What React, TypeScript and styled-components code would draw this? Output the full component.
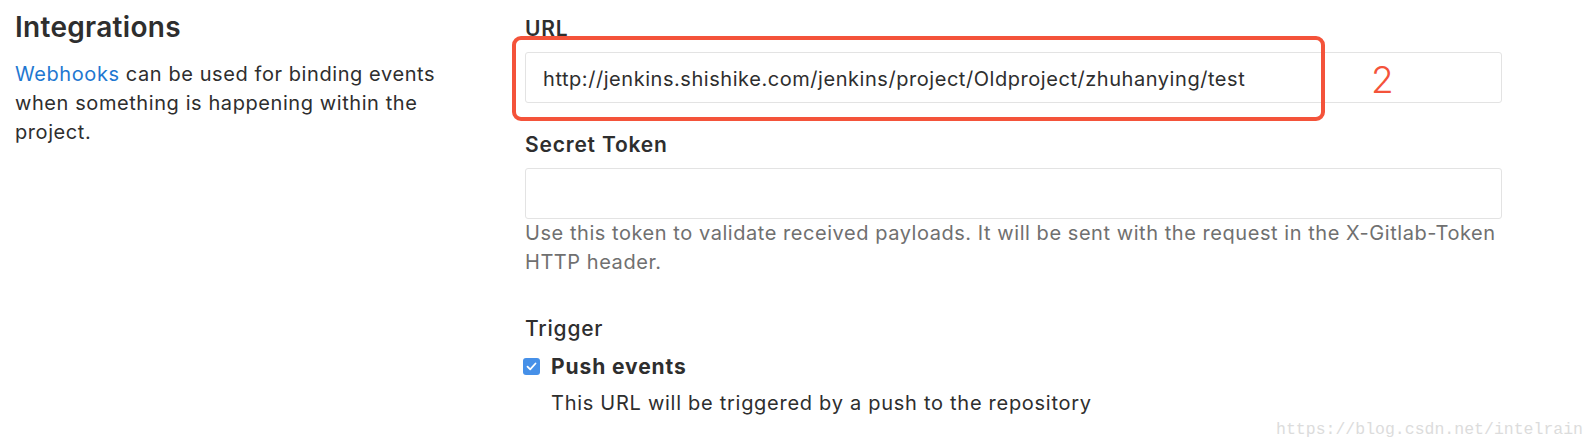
import React from "react";
import styled, { createGlobalStyle } from "styled-components";

const GlobalStyle = createGlobalStyle`
  html, body { margin: 0; padding: 0; background: #ffffff; }
  body { font-family: Inter, "Noto Sans", "Liberation Sans", sans-serif; color: #2e2e2e; }
  * { box-sizing: border-box; }
`;

const Page = styled.div`
  position: relative;
  width: 1596px;
  height: 448px;
  overflow: hidden;
  display: grid;
  grid-template-columns: 510px 977px;
  padding-left: 15px;
  align-items: start;
`;

const Side = styled.div`
  display: flex;
  flex-direction: column;
`;

const Heading = styled.h4`
  margin: 9px 0 0;
  font-size: 28px;
  letter-spacing: 0.3px;
  line-height: 36px;
  font-weight: 600;
  color: #2e2e2e;
`;

const Intro = styled.p`
  margin: 15px 0 0;
  width: 440px;
  font-size: 20px;
  letter-spacing: 0.58px;
  line-height: 29px;
  color: #2e2e2e;
`;

const Link = styled.a`
  color: #1f78d1;
  text-decoration: none;
`;

const Main = styled.div`
  display: flex;
  flex-direction: column;
  padding-top: 14px;
`;

const Label = styled.label<{ $gap?: number; $weight?: number }>`
  display: block;
  margin-top: ${(p) => p.$gap ?? 0}px;
  font-size: 21px;
  letter-spacing: 0.8px;
  line-height: 29px;
  font-weight: ${(p) => p.$weight ?? 600};
  color: #2e2e2e;
`;

const Field = styled.div`
  position: relative;
  margin-top: 9px;
`;

const Input = styled.div`
  height: 51px;
  width: 977px;
  border: 1px solid #e3e3e3;
  border-radius: 3px;
  padding: 3px 17px 0;
  display: flex;
  align-items: center;
  font-size: 20px;
  letter-spacing: 0.55px;
  color: #2e2e2e;
  white-space: nowrap;
`;

const Highlight = styled.div`
  position: absolute;
  left: -13px;
  top: -16px;
  width: 813px;
  height: 85px;
  border: 4.5px solid #f4533a;
  border-radius: 9px;
  pointer-events: none;
`;

const Marker = styled.span`
  position: absolute;
  left: 846px;
  top: 9px;
  font-size: 37px;
  line-height: 37px;
  font-weight: 300;
  color: #f4533a;
`;

const Help = styled.p`
  margin: 0;
  font-size: 20px;
  letter-spacing: 0.55px;
  line-height: 29px;
  color: #707070;
`;

const CheckRow = styled.div`
  display: flex;
  align-items: center;
  gap: 11px;
  margin-top: 9px;
  margin-left: -2px;
`;

const Box = styled.span`
  width: 17px;
  height: 17px;
  border-radius: 3px;
  background: #4690e8;
  display: inline-flex;
  align-items: center;
  justify-content: center;
`;

const CheckLabel = styled.span`
  font-size: 21px;
  letter-spacing: 0.9px;
  line-height: 29px;
  font-weight: 700;
  color: #2e2e2e;
`;

const CheckHelp = styled.p`
  margin: 8px 0 0 26px;
  font-size: 20px;
  letter-spacing: 0.72px;
  line-height: 29px;
  color: #2e2e2e;
`;

const Watermark = styled.span`
  position: absolute;
  right: 13px;
  top: 422px;
  font-family: "Liberation Mono", "DejaVu Sans Mono", monospace;
  font-size: 16.5px;
  line-height: 16.5px;
  color: #dcdcdc;
`;

export default function App() {
  return (
    <>
      <GlobalStyle />
      <Page>
        <Side>
          <Heading>Integrations</Heading>
          <Intro>
            <Link href="#">Webhooks</Link> can be used for binding events when something is
            happening within the project.
          </Intro>
        </Side>
        <Main>
          <Label>URL</Label>
          <Field>
            <Input>http://jenkins.shishike.com/jenkins/project/Oldproject/zhuhanying/test</Input>
            <Highlight />
            <Marker>2</Marker>
          </Field>
          <Label $gap={27}>Secret Token</Label>
          <Field>
            <Input />
          </Field>
          <Help>
            Use this token to validate received payloads. It will be sent with the request in the
            X-Gitlab-Token
            <br />
            HTTP header.
          </Help>
          <Label $gap={37} $weight={500}>Trigger</Label>
          <CheckRow>
            <Box>
              <svg width="11" height="9" viewBox="0 0 11 9">
                <path d="M1.5 4.6 L4.2 7.3 L9.5 1.5" fill="none" stroke="#fff" strokeWidth="1.8" strokeLinecap="round" strokeLinejoin="round" />
              </svg>
            </Box>
            <CheckLabel>Push events</CheckLabel>
          </CheckRow>
          <CheckHelp>This URL will be triggered by a push to the repository</CheckHelp>
        </Main>
        <Watermark>https://blog.csdn.net/intelrain</Watermark>
      </Page>
    </>
  );
}
